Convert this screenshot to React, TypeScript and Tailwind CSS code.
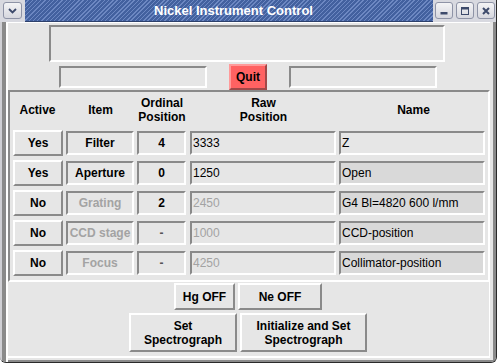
import React from "react";

const sunken =
  "border-2 border-t-[#8a8a8a] border-l-[#8a8a8a] border-b-white border-r-white";
const raised =
  "border-2 border-t-white border-l-white border-b-[#8a8a8a] border-r-[#8a8a8a]";

function TBtn({ children }: { children: React.ReactNode }) {
  return (
    <div className="w-[18px] h-[17px] rounded-[3px] border border-[#8e93a6] bg-[linear-gradient(#f4f4f6,#d6d7de)] flex items-center justify-center">
      {children}
    </div>
  );
}

type Row = {
  active: string;
  item: string;
  ord: string;
  raw: string;
  name: string;
  enabled: boolean;
  nameLight?: boolean;
};

const rows: Row[] = [
  { active: "Yes", item: "Filter", ord: "4", raw: "3333", name: "Z", enabled: true, nameLight: true },
  { active: "Yes", item: "Aperture", ord: "0", raw: "1250", name: "Open", enabled: true },
  { active: "No", item: "Grating", ord: "2", raw: "2450", name: "G4 Bl=4820 600 l/mm", enabled: false },
  { active: "No", item: "CCD stage", ord: "-", raw: "1000", name: "CCD-position", enabled: false },
  { active: "No", item: "Focus", ord: "-", raw: "4250", name: "Collimator-position", enabled: false },
];

export default function App() {
  return (
    <div className="w-[497px] h-[363px] bg-[#e6e6e6] overflow-hidden font-['Liberation_Sans',Arial,sans-serif] text-[12px] text-black border-r border-b border-[#2a2a2a] rounded-br-[6px] rounded-bl-[6px] flex flex-col">
      {/* Title bar */}
      <div className="h-[22px] flex bg-[#d8d9e0] shrink-0">
        <div className="w-[25px] flex pt-[2px] pl-[3px]">
          <div className="w-[19px] h-[17px] rounded-[3px] border border-[#8e93a6] bg-[linear-gradient(#f4f4f6,#d6d7de)] flex items-center justify-center">
            <svg width="9" height="6" viewBox="0 0 9 6">
              <path d="M1 1 L4.5 4.5 L8 1" stroke="#3d4a6b" strokeWidth="1.8" fill="none" />
            </svg>
          </div>
        </div>
        <div className="w-[408px] h-[22px] border-b border-[#2d406b] bg-[repeating-linear-gradient(135deg,#43619f_0px,#43619f_2px,#6d88c2_2px,#6d88c2_3px)] flex items-center justify-center pl-[9px]">
          <span className="text-white font-bold text-[13px] leading-none">
            Nickel Instrument Control
          </span>
        </div>
        <div className="flex-1 flex gap-[3px] pt-[2px] pl-[2px]">
          <TBtn>
            <svg width="10" height="10" viewBox="0 0 10 10">
              <rect x="1.5" y="6" width="7" height="2.5" fill="#3d4a6b" />
            </svg>
          </TBtn>
          <TBtn>
            <svg width="10" height="10" viewBox="0 0 10 10">
              <rect x="1.5" y="1.5" width="7" height="7" stroke="#3d4a6b" strokeWidth="1" fill="none" />
              <rect x="1.5" y="1.5" width="7" height="2" fill="#3d4a6b" />
            </svg>
          </TBtn>
          <TBtn>
            <svg width="10" height="10" viewBox="0 0 10 10">
              <path d="M2 2 L8 8 M8 2 L2 8" stroke="#3d4a6b" strokeWidth="2" />
            </svg>
          </TBtn>
        </div>
      </div>

      {/* Body */}
      <div className="flex flex-1">
        {/* left frame */}
        <div className="w-[8px] border-l-2 border-l-[#cfcfd4] bg-[#8a8a8a] border-r-2 border-r-white shrink-0" />
        {/* content */}
        <div className="w-[482px] flex flex-col border-t border-white">
          {/* top section */}
          <div className="h-[67px] flex flex-col items-start pt-[2px]">
            <div className={`ml-[41px] w-[396px] h-[37px] bg-[#e6e6e6] ${sunken}`} />
            <div className="mt-[2px] ml-[51px] flex items-center gap-[22px] h-[26px]">
              <div className={`w-[148px] h-[22px] ${sunken}`} />
              <div className="w-[38px] h-[26px] bg-[#ff6262] border-2 border-t-[#ff9a9a] border-l-[#ff9a9a] border-b-[#a04848] border-r-[#a04848] flex items-center justify-center font-bold">
                Quit
              </div>
              <div className={`w-[148px] h-[22px] ${sunken}`} />
            </div>
          </div>

          {/* table frame */}
          <div className={`h-[192px] ${sunken} flex flex-col`}>
            <div className="h-[36px] flex items-center font-bold">
              <div className="w-[55px] text-center">Active</div>
              <div className="w-[70px] text-center pl-[1px]">Item</div>
              <div className="w-[52px] text-center pl-[2px] leading-[14px]">
                Ordinal
                <br />
                Position
              </div>
              <div className="w-[150px] text-center pl-[3px] leading-[14px]">
                Raw
                <br />
                Position
              </div>
              <div className="w-[151px] text-center pl-[2px]">Name</div>
            </div>
            {rows.map((r) => (
              <div key={r.item} className="h-[30px] flex items-center">
                <div className={`ml-[3px] w-[50px] h-[26px] ${raised} flex items-center justify-center font-bold`}>
                  {r.active}
                </div>
                <div
                  className={`ml-[3px] w-[68px] h-[24px] ${sunken} flex items-center justify-center font-bold whitespace-nowrap ${
                    r.enabled ? "text-black" : "text-[#a3a3a3]"
                  }`}
                >
                  {r.item}
                </div>
                <div
                  className={`ml-[3px] w-[49px] h-[24px] ${sunken} flex items-center justify-center font-bold ${
                    r.ord === "-" ? "text-[#555]" : "text-black"
                  }`}
                >
                  {r.ord}
                </div>
                <div
                  className={`ml-[4px] w-[146px] h-[24px] ${sunken} flex items-center pl-[1px] ${
                    r.enabled ? "text-black" : "text-[#a3a3a3]"
                  }`}
                >
                  {r.raw}
                </div>
                <div
                  className={`ml-[3px] w-[146px] h-[24px] ${sunken} flex items-center pl-[1px] whitespace-nowrap ${
                    r.nameLight ? "bg-[#e6e6e6]" : "bg-[#d9d9d9]"
                  }`}
                >
                  {r.name}
                </div>
              </div>
            ))}
          </div>

          {/* bottom section */}
          <div className="flex-1 flex flex-col pt-[1px] border-r border-white">
            <div className="ml-[166px] flex gap-[3px] h-[27px]">
              <div className={`w-[61px] h-[27px] ${raised} flex items-center justify-center font-bold`}>
                Hg OFF
              </div>
              <div className={`w-[84px] h-[27px] ${raised} flex items-center justify-center font-bold`}>
                Ne OFF
              </div>
            </div>
            <div className="mt-[3px] ml-[121px] flex gap-[3px] h-[39px]">
              <div className={`w-[108px] h-[39px] ${raised} flex items-center justify-center text-center font-bold leading-[14px]`}>
                Set
                <br />
                Spectrograph
              </div>
              <div className={`w-[127px] h-[39px] ${raised} flex items-center justify-center text-center font-bold leading-[14px]`}>
                Initialize and Set
                <br />
                Spectrograph
              </div>
            </div>
          </div>
          {/* bottom frame */}
          <div className="h-[6px] border-t-2 border-white bg-[#e6e6e6] border-b-2 border-b-[#8a8a8a]" />
        </div>
        {/* right frame */}
        <div className="flex-1 border-r-[3px] border-[#8a8a8a] border-b-[2px]" />
      </div>
    </div>
  );
}
